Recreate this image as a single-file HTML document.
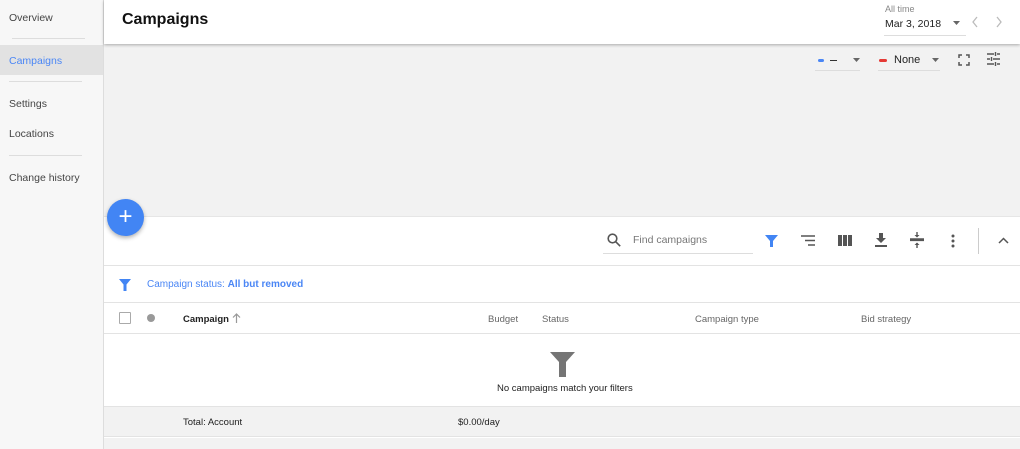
<!DOCTYPE html><html><head><style>
*{margin:0;padding:0;box-sizing:border-box}
body{width:1020px;height:449px;overflow:hidden;font-family:"Liberation Sans",sans-serif;background:#f2f2f2;position:relative;font-size:11px;color:#333}
.a{position:absolute}
.side{left:0;top:0;width:104px;height:449px;background:#f7f7f7;border-right:1px solid #ddd}
.side div{position:absolute;left:9px;font-size:10.5px;color:#444}
.hr{position:absolute;left:12px;width:73px;height:1px;background:#ddd}
.hdr{left:104px;top:0;width:916px;height:44px;background:#fff;box-shadow:0 1px 3px rgba(0,0,0,.3)}
.g{color:#666;font-size:10px}
svg{position:absolute}
</style></head><body>
<div class="a side">
<div style="top:12px">Overview</div>
<div class="hr" style="top:38px;left:12px"></div>
<div style="top:45px;left:0;width:103px;height:30px;background:#e2e2e2"></div>
<div style="top:55px;color:#4a86f5">Campaigns</div>
<div class="hr" style="top:81px"></div>
<div style="top:98px">Settings</div>
<div style="top:128px">Locations</div>
<div class="hr" style="top:155px"></div>
<div style="top:172px">Change history</div>
</div>
<div class="a hdr"></div>
<div class="a" style="left:122px;top:11px;font-size:16px;font-weight:bold;color:#111">Campaigns</div>
<div class="a" style="left:885px;top:4px;font-size:9px;color:#888">All time</div>
<div class="a" style="left:885px;top:18px;font-size:10.5px;color:#222">Mar 3, 2018</div>
<div class="a" style="left:884px;top:35px;width:82px;height:1px;background:#ddd"></div>
<svg style="left:952px;top:20px" width="10" height="6"><path d="M1 1h7l-3.5 4z" fill="#666"/></svg>
<svg style="left:970px;top:16px" width="10" height="12"><path d="M7 1L3 6l4 5" stroke="#bbb" fill="none" stroke-width="1.3"/></svg>
<svg style="left:994px;top:16px" width="10" height="12"><path d="M3 1l4 5-4 5" stroke="#bbb" fill="none" stroke-width="1.3"/></svg>
<div class="a" style="left:818px;top:59px;width:6px;height:3px;background:#4a86f5;border-radius:2px"></div>
<div class="a" style="left:830px;top:60px;width:7px;height:1px;background:#333"></div>
<svg style="left:852px;top:58px" width="10" height="6"><path d="M1 0h7l-3.5 4z" fill="#666"/></svg>
<div class="a" style="left:815px;top:70px;width:45px;height:1px;background:#ddd"></div>
<div class="a" style="left:879px;top:59px;width:8px;height:3px;background:#e53935;border-radius:2px"></div>
<div class="a" style="left:894px;top:54px;font-size:11px;color:#222">None</div>
<svg style="left:931px;top:58px" width="10" height="6"><path d="M1 0h7l-3.5 4z" fill="#666"/></svg>
<div class="a" style="left:878px;top:70px;width:62px;height:1px;background:#ddd"></div>
<svg style="left:958px;top:54px" width="12" height="12" fill="none" stroke="#555" stroke-width="1.5"><path d="M1 4V1h3M8 1h3v3M11 8v3H8M4 11H1V8"/></svg>
<svg style="left:986px;top:52px" width="15" height="14" stroke="#555" stroke-width="1.4"><path d="M1 2h7M11 2h3M1 7h3M7 7h7M1 12h7M11 12h3M9.5 0v4M5.5 5v4M9.5 10v4"/></svg>
<div class="a" style="left:104px;top:216px;width:916px;height:233px;background:#fff;border-top:1px solid #e6e6e6"></div>
<div class="a" style="left:107px;top:199px;width:37px;height:37px;border-radius:50%;background:#4285f4;box-shadow:0 2px 4px rgba(0,0,0,.3);color:#fff;font-size:24px;line-height:35px;text-align:center">+</div>
<svg style="left:607px;top:233px" width="14" height="14" fill="none" stroke="#555" stroke-width="1.6"><circle cx="5.5" cy="5.5" r="4.3"/><path d="M8.7 8.7l4.5 4.5"/></svg>
<div class="a" style="left:633px;top:234px;font-size:10.5px;color:#777">Find campaigns</div>
<div class="a" style="left:603px;top:253px;width:150px;height:1px;background:#ddd"></div>
<svg style="left:765px;top:234px" width="13" height="13"><path d="M0 1h13l-5 6v6H5V7z" fill="#4285f4"/></svg>
<svg style="left:801px;top:235px" width="14" height="11" stroke="#555" stroke-width="1.4"><path d="M0 1h14M4 5.5h10M7 10h7"/></svg>
<svg style="left:838px;top:235px" width="14" height="11" fill="#555"><rect x="0" y="0" width="4" height="11"/><rect x="5" y="0" width="4" height="11"/><rect x="10" y="0" width="4" height="11"/></svg>
<svg style="left:875px;top:233px" width="12" height="14" fill="#555"><path d="M4 0h4v5h3L6 10 1 5h3zM0 12h12v2H0z"/></svg>
<svg style="left:910px;top:232px" width="14" height="16" fill="#555"><path d="M0 7h14v1.4H0zM7 0v4.5M7 11v5" stroke="#555" stroke-width="1.4"/><path d="M4.5 3L7 5.5 9.5 3zM4.5 13L7 10.5 9.5 13z"/></svg>
<svg style="left:951px;top:234px" width="4" height="14" fill="#555"><circle cx="2" cy="2" r="1.5"/><circle cx="2" cy="7" r="1.5"/><circle cx="2" cy="12" r="1.5"/></svg>
<div class="a" style="left:978px;top:228px;width:1px;height:26px;background:#ccc"></div>
<svg style="left:998px;top:237px" width="11" height="8" fill="none" stroke="#555" stroke-width="1.5"><path d="M1 6l4.5-4.5L10 6"/></svg>
<div class="a" style="left:104px;top:265px;width:916px;height:1px;background:#e3e3e3"></div>
<svg style="left:119px;top:279px" width="12" height="12"><path d="M0 0h12L7.5 5.5V12h-3V5.5z" fill="#4285f4"/></svg>
<div class="a" style="left:147px;top:279px;font-size:10px;color:#4a86f5">Campaign status: <b>All but removed</b></div>
<div class="a" style="left:104px;top:302px;width:916px;height:1px;background:#e3e3e3"></div>
<div class="a" style="left:119px;top:312px;width:12px;height:12px;border:1.5px solid #aaa;border-radius:1px"></div>
<div class="a" style="left:147px;top:314px;width:8px;height:8px;border-radius:50%;background:#999"></div>
<div class="a" style="left:183px;top:314px;font-size:9.5px;font-weight:bold;color:#222">Campaign</div>
<svg style="left:232px;top:313px" width="9" height="10" stroke="#999" fill="none" stroke-width="1.2"><path d="M4.5 10V1M1 4.5l3.5-3.5L8 4.5"/></svg>
<div class="a g" style="left:488px;top:314px;font-size:9.5px">Budget</div>
<div class="a g" style="left:542px;top:314px;font-size:9.5px">Status</div>
<div class="a g" style="left:695px;top:314px;font-size:9.5px">Campaign type</div>
<div class="a g" style="left:861px;top:314px;font-size:9.5px">Bid strategy</div>
<div class="a" style="left:104px;top:333px;width:916px;height:1px;background:#e3e3e3"></div>
<svg style="left:550px;top:352px" width="26" height="26"><path d="M0 0h25L16 10v15H9V10z" fill="#757575"/></svg>
<div class="a" style="left:497px;top:383px;font-size:9.5px;color:#222">No campaigns match your filters</div>
<div class="a" style="left:104px;top:406px;width:916px;height:31px;background:#f2f2f2;border-top:1px solid #e3e3e3;border-bottom:1px solid #e3e3e3"></div>
<div class="a" style="left:183px;top:417px;font-size:9.5px;color:#222">Total: Account</div>
<div class="a" style="left:458px;top:417px;font-size:9.5px;color:#222">$0.00/day</div>
<div class="a" style="left:104px;top:438px;width:916px;height:11px;background:#f2f2f2"></div>
</body></html>
